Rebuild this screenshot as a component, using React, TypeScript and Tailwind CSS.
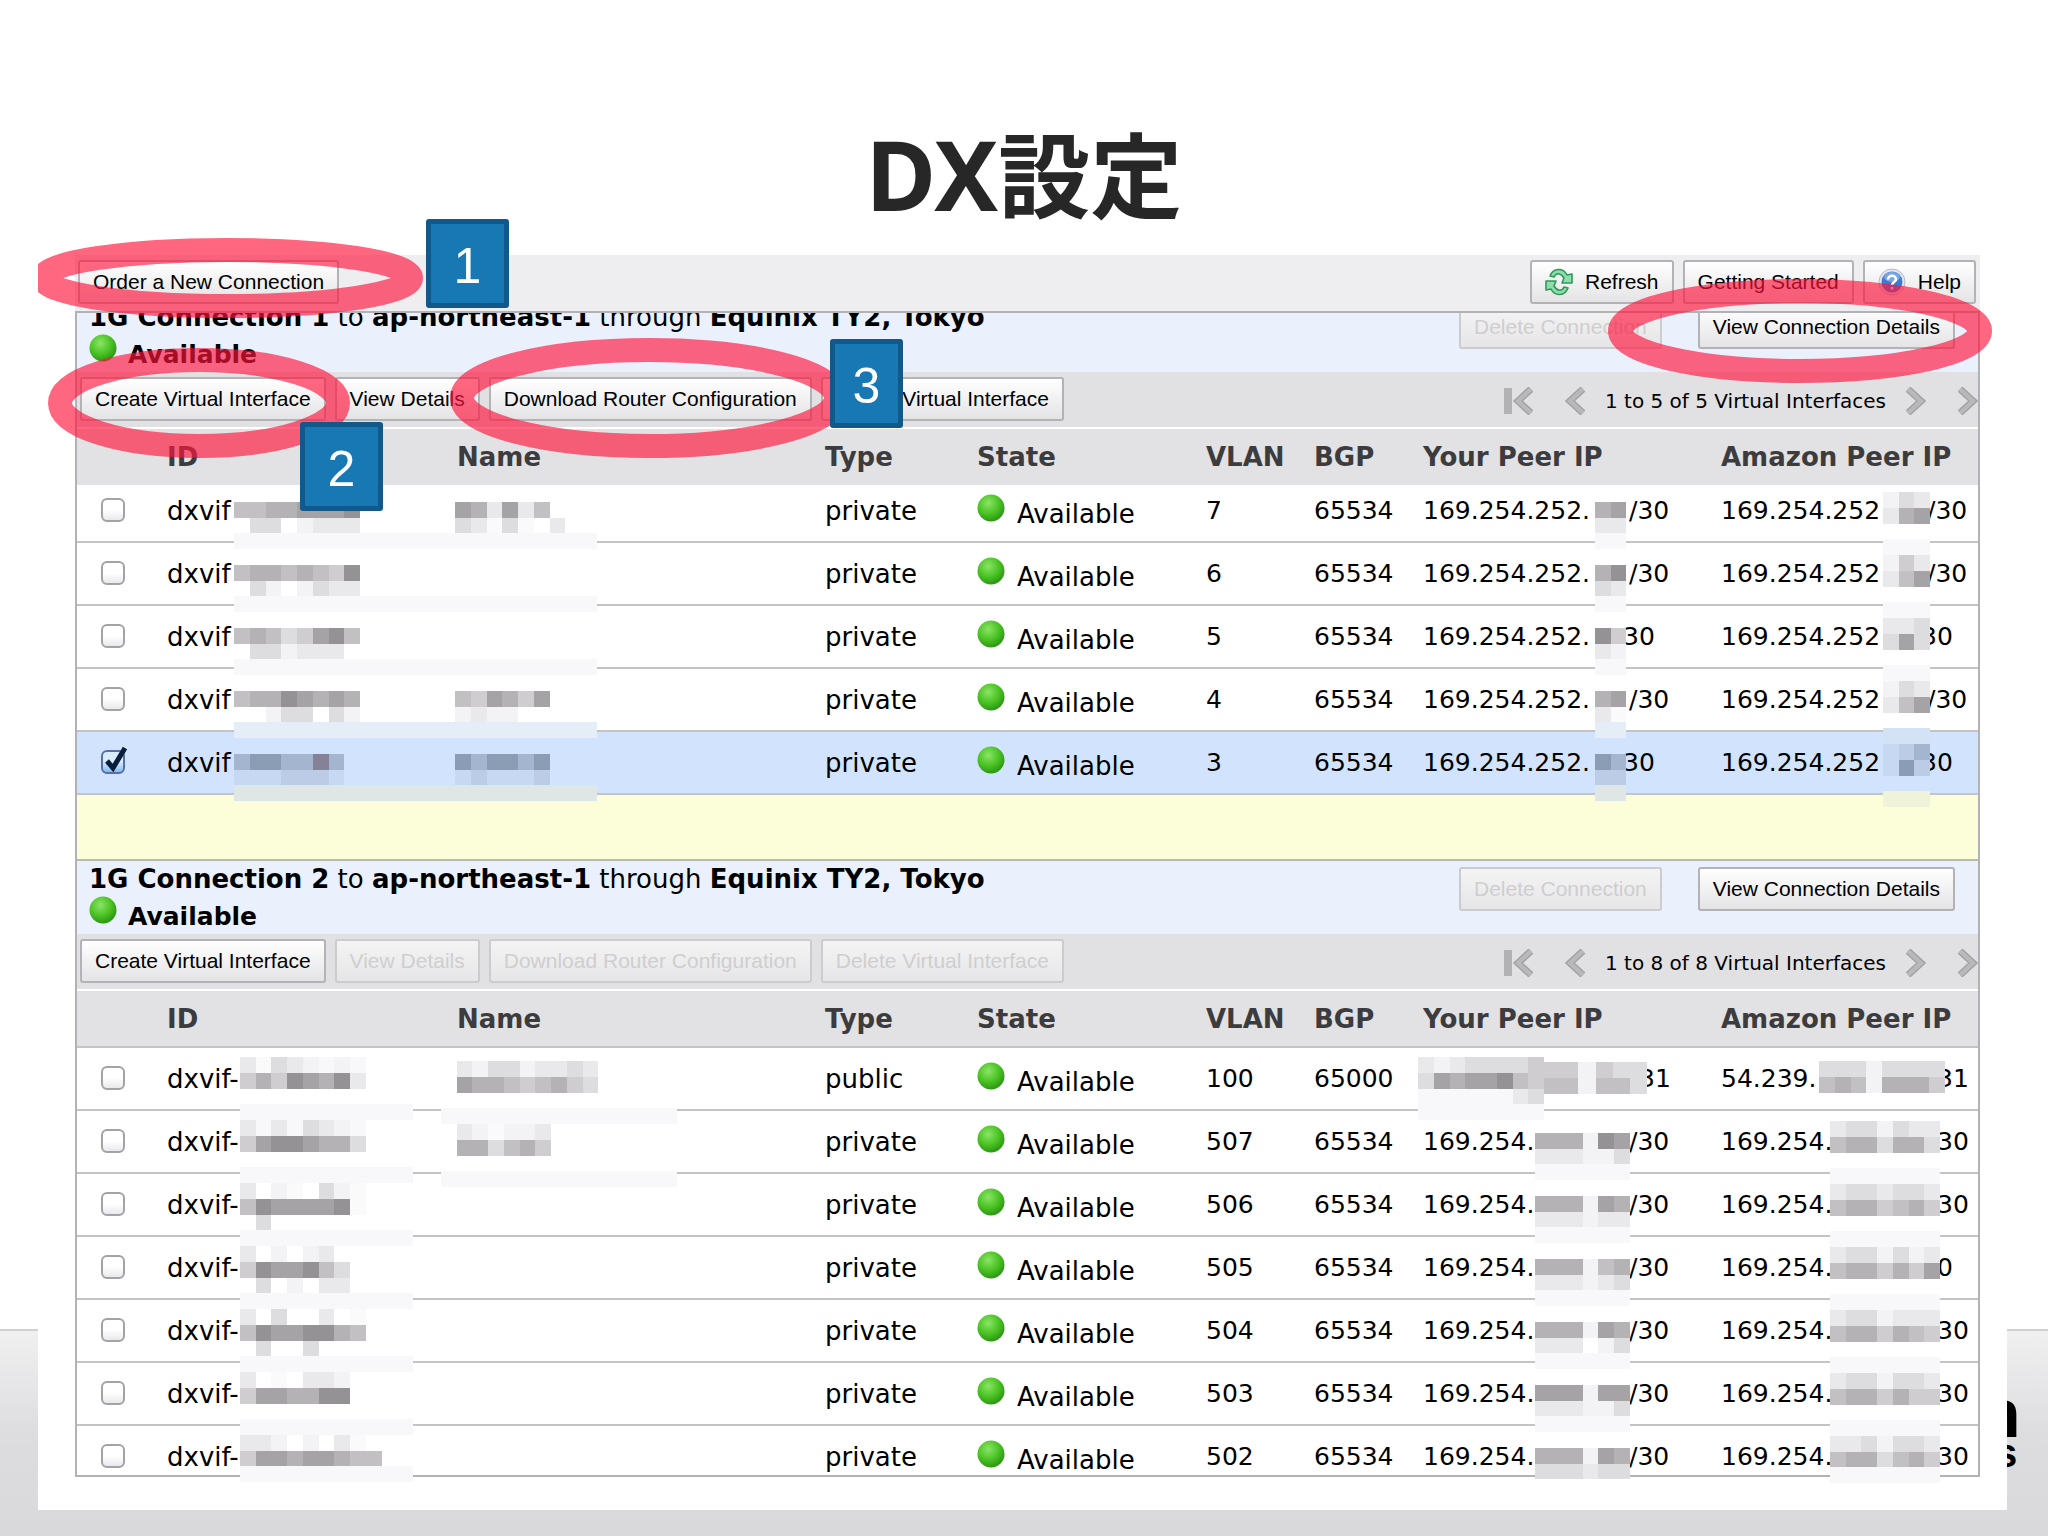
import React from "react";

const PALETTE: Record<string, string> = {
  "0": "#ffffff",
  "1": "#fbfafb",
  "2": "#f3f2f4",
  "3": "#e9e8ea",
  "4": "#dddcde",
  "5": "#cfcdcf",
  "6": "#c2c0c2",
  "7": "#b4b2b4",
  "8": "#a5a3a6",
  "9": "#949294",
  s: "#f8f7fa",
  A: "#c6d8f2",
  B: "#bccce6",
  C: "#a4b6cf",
  D: "#8b9db5",
  E: "#858297",
  b: "#e5edf7",
  g: "#dfe6e6",
  y: "#eff3da",
  L: "#d3e3f5",
};

/* Pixelated patch that hides part of a value. */
function Mosaic({ rows, className }: { rows: string[]; className: string }) {
  const cols = Math.max(...rows.map((r) => r.length));
  return (
    <svg
      aria-hidden="true"
      viewBox={`0 0 ${cols} ${rows.length}`}
      preserveAspectRatio="none"
      shapeRendering="crispEdges"
      className={`absolute z-10 max-w-none ${className}`}
    >
      {rows.map((r, y) =>
        r.split("").map((c, x) =>
          c === " " ? null : <rect key={`${x}-${y}`} x={x} y={y} width="1" height="1" fill={PALETTE[c]} />
        )
      )}
    </svg>
  );
}

type Patch = { rows: string[]; className: string };
type Ip = { head: string; tail: string; tailClass: string; patches: Patch[] };
type Row = {
  id: string;
  idPatch: Patch;
  namePatch?: Patch;
  type: string;
  vlan: string;
  bgp: string;
  yours: Ip;
  amazon: Ip;
  checked?: boolean;
};

const STRIP = "sssssssssssssssssssssss";

const rowA = (
  vlan: string,
  id: string[],
  yours: string[],
  amazon: string[],
  short: boolean,
  checked = false
): Row => ({
  id: "dxvif",
  idPatch: { rows: id, className: "left-[67px] top-[6px] w-[363px] h-[47px]" },
  type: "private",
  vlan,
  bgp: "65534",
  checked,
  yours: {
    head: "169.254.252.",
    tail: short ? "30" : "/30",
    tailClass: short ? "left-[200px]" : "left-[206px]",
    patches: [{ rows: yours, className: "left-[172px] top-[6px] w-[31px] h-[47px]" }],
  },
  amazon: {
    head: "169.254.252",
    tail: short ? "30" : "/30",
    tailClass: short ? "left-[200px]" : "left-[206px]",
    patches: [{ rows: amazon, className: "left-[162px] top-[-4px] w-[47px] h-[63px]" }],
  },
});

const first: Row[] = [
  rowA("7", ["66778889      873836   ", " 44 2333      43141 2  ".replace("2  ", "3  "), STRIP], ["78", "33", "ss"], ["243", "378", "   ", "sss"], false),
  rowA("6", ["67767659", " 42 2433", STRIP], ["79", "43", "ss"], ["253", "368", "   ", "sss"], false),
  rowA("5", ["67645896", " 442333 ", STRIP], ["95", "32", "ss"], ["334", "484", "   ", "sss"], true),
  rowA("4", ["67798787      658758", "  244 42      2322  ", "bbbbbbbbbbbbbbbbbbbbbbb"], ["78", "31", "bb"], ["243", "368", "   ", "LLL"], false),
  rowA("3", ["CDDCCEC       DCDDCD", "AAABBBA       ABAAAB", "ggggggggggggggggggggggg"], ["DC", "BB", "gg"], ["ABC", "ADB", "   ", "yyy"], true, true),
];

const rowB = (vlan: string, id: string[], yours: string[], amazon: string[], tail = "30"): Row => ({
  id: "dxvif-",
  idPatch: {
    rows: [...id, "sssssssssss"],
    className: id.length === 2 ? "left-[73px] top-[-7px] w-[173px] h-[47px]" : "left-[73px] top-[-7px] w-[173px] h-[63px]",
  },
  type: "private",
  vlan,
  bgp: "65534",
  yours: {
    head: "169.254.",
    tail: "/30",
    tailClass: "left-[206px]",
    patches: [
      id.length === 2
        ? { rows: yours, className: "left-[112px] top-[6px] w-[95px] h-[31px]" }
        : { rows: [...yours, "ssssss"], className: "left-[112px] top-[6px] w-[95px] h-[47px]" },
    ],
  },
  amazon: {
    head: "169.254.",
    tail,
    tailClass: "left-[216px]",
    patches: [
      id.length === 2
        ? { rows: [...amazon, "sssssss"], className: "left-[109px] top-[-6px] w-[110px] h-[47px]" }
        : { rows: [...amazon, "       ", "sssssss"], className: "left-[109px] top-[-6px] w-[110px] h-[63px]" },
    ],
  },
});

const second: Row[] = [
  {
    id: "dxvif-",
    idPatch: {
      rows: ["31432s2s", "57598793", "        ", "sssssssssss"],
      className: "left-[73px] top-[-7px] w-[173px] h-[63px]",
    },
    namePatch: {
      rows: [" 324423343", " 877656754", "          ", "sssssssssssssss"],
      className: "left-[-16px] top-[-3px] w-[236px] h-[63px]",
    },
    type: "public",
    vlan: "100",
    bgp: "65000",
    yours: {
      head: "",
      tail: "31",
      tailClass: "left-[216px]",
      patches: [
        { rows: ["32344445", "48788965", "ssssss34", "ssssssss"], className: "left-[-5px] top-[-7px] w-[126px] h-[63px]" },
        { rows: ["552544", "662664"], className: "left-[121px] top-[-2px] w-[103px] h-[32px]" },
      ],
    },
    amazon: {
      head: "54.239.",
      tail: "31",
      tailClass: "left-[216px]",
      patches: [{ rows: ["44424444", "67627775"], className: "left-[98px] top-[-3px] w-[126px] h-[32px]" }],
    },
  },
  {
    ...rowB("507", ["3s3s432s", "58998774", "        "], ["777298", "333224"], ["3442433", "6774774"]),
    namePatch: {
      rows: [" 321223", " 774675", "       ", "sssssssssssssss"],
      className: "left-[-16px] top-[-3px] w-[236px] h-[63px]",
    },
  },
  rowB("506", ["30210421", "69888891", " 4      "], ["777287", "333233"], ["3443443", "6775675"]),
  rowB("505", ["3020230", "5988964", " 4 2 33"], ["777267", "333234"], ["3442423", "6775758"], "0"),
  rowB("504", ["30400301", "69889976", " 4  4   "], ["777287", "333 24"], ["3442333", "6775765"]),
  rowB("503", ["3010332", "5887799", "       "], ["888288", "333224"], ["3442443", "6775755"]),
  rowB("502", ["332020310", "588788766"], ["777287", "444344"], ["3342443", "6774675"]),
];

function Ball() {
  return (
    <svg aria-hidden="true" viewBox="0 0 28 28" className="h-7 w-7 shrink-0">
      <defs>
        <radialGradient id="ball" cx="0.4" cy="0.32" r="0.7">
          <stop offset="0" stopColor="#8be468" />
          <stop offset="0.55" stopColor="#4cc425" />
          <stop offset="1" stopColor="#2a9512" />
        </radialGradient>
      </defs>
      <circle cx="14" cy="14" r="13.5" fill="url(#ball)" />
    </svg>
  );
}

function Btn({ children, disabled = false, plain = false }: { children: React.ReactNode; disabled?: boolean; plain?: boolean }) {
  return (
    <button
      type="button"
      disabled={disabled}
      className={
        "flex h-11 shrink-0 items-center whitespace-nowrap rounded-[3px] border-2 px-[13px] pb-[1px] text-[21px] leading-6 " +
        (disabled
          ? "border-[#cccbcd] bg-gradient-to-b from-[#f4f4f4] to-[#e6e6e8] text-[#cfcecf]"
          : "border-[#b3b2b6] bg-gradient-to-b from-white to-[#e4e4e6] text-black") +
        (plain ? " gap-3" : "")
      }
    >
      {children}
    </button>
  );
}

function Chevron({ dir, bar = false, label }: { dir: "left" | "right"; bar?: boolean; label: string }) {
  const d = dir === "right" ? "M2 2 L15 14 L2 26" : bar ? "M28 2 L15 14 L28 26" : "M18 2 L5 14 L18 26";
  return (
    <button type="button" aria-label={label} className="shrink-0">
      <svg aria-hidden="true" viewBox={bar ? "0 0 30 28" : "0 0 20 28"} className={bar ? "h-7 w-[30px]" : "h-7 w-5"}>
        {bar && <rect x="1" y="1" width="8" height="26" fill="#b2b1b3" />}
        <path d={d} fill="none" stroke="#a4a3a5" strokeWidth="7" />
        <path d={d} fill="none" stroke="#b9b8ba" strokeWidth="4" />
      </svg>
    </button>
  );
}

function IpCell({ ip }: { ip: Ip }) {
  return (
    <div className="relative h-[30px]">
      {ip.head}
      <span className={`absolute top-0 ${ip.tailClass}`}>{ip.tail}</span>
      {ip.patches.map((p, i) => (
        <Mosaic key={i} {...p} />
      ))}
    </div>
  );
}

function Interfaces({ rows, label, headClass, firstPad, lastClass }: { rows: Row[]; label: string; headClass: string; firstPad: string; lastClass: string }) {
  return (
    <table aria-label={label} className="w-full table-fixed border-separate border-spacing-0 text-left text-[25px] leading-[30px]">
      <colgroup>
        <col className="w-[90px]" />
        <col className="w-[290px]" />
        <col className="w-[368px]" />
        <col className="w-[152px]" />
        <col className="w-[229px]" />
        <col className="w-[108px]" />
        <col className="w-[109px]" />
        <col className="w-[298px]" />
        <col />
      </colgroup>
      <thead className="bg-[#e2e1e3] text-[26px] text-[#3c3c3e]">
        <tr>
          {["", "ID", "Name", "Type", "State", "VLAN", "BGP", "Your Peer IP", "Amazon Peer IP"].map((h, i) => (
            <th key={i} scope="col" className={`whitespace-nowrap p-0 pt-[13px] align-top font-bold ${headClass}`}>
              {h}
            </th>
          ))}
        </tr>
      </thead>
      <tbody>
        {rows.map((r, i) => {
          const last = i === rows.length - 1 && lastClass !== "";
          const cell = `p-0 align-top whitespace-nowrap ${last ? lastClass : i === 0 && firstPad === "pt-[11px]" ? "h-[58px] border-b-2 border-[#c4c3c6]" : "h-[63px] border-b-2 border-[#c4c3c6]"} ${i === 0 ? firstPad : "pt-4"}`;
          return (
            <tr key={r.vlan} className={r.checked ? "bg-[#d2e4fd]" : "bg-white"}>
              <td className={cell}>
                <div className="relative ml-6 mt-[2px] h-6">
                  <input
                    type="checkbox"
                    defaultChecked={r.checked}
                    aria-label={`Select virtual interface on VLAN ${r.vlan}`}
                    className="peer block h-6 w-6 appearance-none rounded-[6px] border-2 border-[#a3a2a6] bg-gradient-to-b from-white from-50% to-[#e9e8ec] checked:border-[#5a6fa8] checked:from-[#d9ecfb] checked:to-[#7fbdee]"
                  />
                  <svg aria-hidden="true" viewBox="0 0 30 30" className="pointer-events-none absolute -top-1 left-0 hidden h-[30px] w-[30px] peer-checked:block">
                    <path d="M6 15 L12 22 L24 2" fill="none" stroke="#0b1d3c" strokeWidth="5" />
                  </svg>
                </div>
              </td>
              <td className={cell}>
                <div className="relative h-[30px] text-[26px]">
                  {r.id}
                  <Mosaic {...r.idPatch} />
                </div>
              </td>
              <td className={cell}>
                <div className="relative h-[30px]">{r.namePatch && <Mosaic {...r.namePatch} />}</div>
              </td>
              <td className={`${cell} text-[26px]`}>{r.type}</td>
              <td className={cell}>
                <div className="relative -top-[2px] flex h-[33px] items-start gap-3">
                  <Ball />
                  <span className="pt-[5px] text-[26px]">Available</span>
                </div>
              </td>
              <td className={cell}>{r.vlan}</td>
              <td className={cell}>{r.bgp}</td>
              <td className={cell}>
                <IpCell ip={r.yours} />
              </td>
              <td className={cell}>
                <IpCell ip={r.amazon} />
              </td>
            </tr>
          );
        })}
      </tbody>
    </table>
  );
}

function ConnectionHead({ n, className }: { n: number; className: string }) {
  return (
    <div className="overflow-hidden bg-[#eaf1fd]">
      <div className={`flex h-[73px] items-start ${className}`}>
        <div className="flex-1 pl-3 pt-[3px] leading-[30px]">
          <h2 className="text-[26px]">
            <b>1G Connection {n}</b> to <b>ap-northeast-1</b> through <b>Equinix TY2, Tokyo</b>
          </h2>
          <div className="flex items-start gap-[11px] pt-[2px] text-[25px]">
            <Ball />
            <b className="pt-[6px]">Available</b>
          </div>
        </div>
        <div className="flex gap-9 pr-[23px] pt-[6px] font-['Liberation_Sans',sans-serif]">
          <Btn disabled>Delete Connection</Btn>
          <Btn>View Connection Details</Btn>
        </div>
      </div>
    </div>
  );
}

function Bar({ count, disabled }: { count: number; disabled: boolean }) {
  return (
    <div className="flex items-start justify-between overflow-hidden border-b-2 border-white bg-[#e1e0e2]">
      <div className="flex h-[55px] gap-[9px] pl-[3px] pt-[5px] font-['Liberation_Sans',sans-serif]">
        <Btn>Create Virtual Interface</Btn>
        <Btn disabled={disabled}>View Details</Btn>
        <Btn disabled={disabled}>Download Router Configuration</Btn>
        <Btn disabled={disabled}>Delete Virtual Interface</Btn>
      </div>
      <div className="flex items-center pt-[15px] text-[20px] leading-7">
        <Chevron dir="left" bar label="First page" />
        <span className="w-8" />
        <Chevron dir="left" label="Previous page" />
        <span className="px-5">
          1 to {count} of {count} Virtual Interfaces
        </span>
        <Chevron dir="right" label="Next page" />
        <span className="w-8" />
        <Chevron dir="right" label="Last page" />
      </div>
    </div>
  );
}

function Ring({ rx, ry, className }: { rx: number; ry: number; className: string }) {
  const w = (rx + 12) * 2;
  const h = (ry + 12) * 2;
  return (
    <svg aria-hidden="true" width={w} height={h} viewBox={`0 0 ${w} ${h}`} className={`pointer-events-none absolute z-20 max-w-none ${className}`}>
      <ellipse cx={w / 2} cy={h / 2} rx={rx} ry={ry} fill="none" stroke="rgb(255,20,60)" strokeOpacity="0.65" strokeWidth="24" />
    </svg>
  );
}

function Step({ n, className }: { n: number; className: string }) {
  return (
    <div
      className={`absolute z-30 flex h-[89px] items-center justify-center rounded-[3px] border-[5px] border-[#10598a] bg-[#1878b4] pt-1 font-['Liberation_Sans',sans-serif] text-[50px] leading-none text-white ${className}`}
    >
      {n}
    </div>
  );
}

export default function App() {
  return (
    <main className="relative min-h-screen overflow-hidden bg-white font-['DejaVu_Sans',sans-serif] text-black">
      <div className="absolute inset-x-0 bottom-0 flex h-[207px] justify-end border-t-2 border-[#d0cfd1] bg-gradient-to-b from-[#f0f0f1] via-[#dddcde] to-[#d9d8da]">
        <div className="flex w-[41px] flex-col items-start overflow-hidden font-['Liberation_Sans',sans-serif] font-bold text-black">
          <span className="-ml-7 pt-[52px] text-[68px] leading-[60px]">n</span>
          <span className="-ml-3 -mt-2 text-[40px] leading-9">s</span>
        </div>
      </div>

      <h1 className="relative pb-[35px] pt-[130px] text-center font-['Noto_Sans','Noto_Sans_CJK_JP',sans-serif] text-[92px] font-bold leading-[88px] text-[#272727]">
        <span className="text-[96px]">DX</span>設定
      </h1>

      <section className="relative ml-[38px] mr-[41px] bg-white pb-[33px] pl-[37px] pr-[27px]">
        <div className="flex h-14 items-start justify-between bg-[#eeeef0] pl-[3px] pr-1 pt-[5px] font-['Liberation_Sans',sans-serif]">
          <Btn>Order a New Connection</Btn>
          <div className="flex gap-[9px]">
            <Btn plain>
              <svg aria-hidden="true" viewBox="0 0 28 28" className="h-7 w-7">
                <g fill="#8fdcae" stroke="#2f9a58" strokeWidth="1.6" strokeLinejoin="round">
                  <path d="M5 8 C8 0 18 -1 22 7 L27 6 V15 H17 L19 10 C16 5 11 4 9 9 Z" />
                  <path d="M23 20 C20 28 10 29 6 21 L1 22 V13 H11 L9 18 C12 23 17 24 19 19 Z" />
                </g>
              </svg>
              Refresh
            </Btn>
            <Btn>Getting Started</Btn>
            <Btn plain>
              <svg aria-hidden="true" viewBox="0 0 28 28" className="h-7 w-7">
                <circle cx="14" cy="14" r="13" fill="#e3e6ec" stroke="#b4bac6" strokeWidth="1" />
                <circle cx="14" cy="14" r="10.5" fill="#3f78cf" />
                <ellipse cx="14" cy="9" rx="8" ry="5" fill="#79a6e6" />
                <path d="M10 11.5 C10 6.5 18 6.5 18 11.5 C18 14 14 14 14 17 M14 19 V21.5" fill="none" stroke="#fff" strokeWidth="2.6" />
              </svg>
              Help
            </Btn>
          </div>
        </div>

        <div className="border-2 border-[#b2b1b6]">
          <ConnectionHead n={1} className="-mt-[14px]" />
          <Bar count={5} disabled={false} />
          <Interfaces rows={first} label="Connection 1 virtual interfaces" headClass="h-14" firstPad="pt-[11px]" lastClass="" />
          <div className="h-[66px] border-b-2 border-[#b8b8b4] bg-[#fcfed9]" />
          <ConnectionHead n={2} className="" />
          <Bar count={8} disabled />
          <Interfaces
            rows={second}
            label="Connection 2 virtual interfaces"
            headClass="h-[57px] border-b-2 border-[#c4c3c6]"
            firstPad="pt-4"
            lastClass="border-b-0"
          />
        </div>
      </section>

      <div className="pointer-events-none absolute inset-y-0 left-[38px] right-0 overflow-hidden">
        <Ring rx={184} ry={28} className="left-[-7px] top-[238px]" />
        <Ring rx={139} ry={43} className="left-[10px] top-[348px]" />
        <Ring rx={187} ry={48} className="left-[412px] top-[338px]" />
        <Ring rx={180} ry={40} className="right-[56px] top-[279px]" />
      </div>
      <Step n={1} className="left-[426px] top-[219px] w-[83px]" />
      <Step n={2} className="left-[300px] top-[422px] w-[83px]" />
      <Step n={3} className="left-[830px] top-[339px] w-[73px]" />
    </main>
  );
}
